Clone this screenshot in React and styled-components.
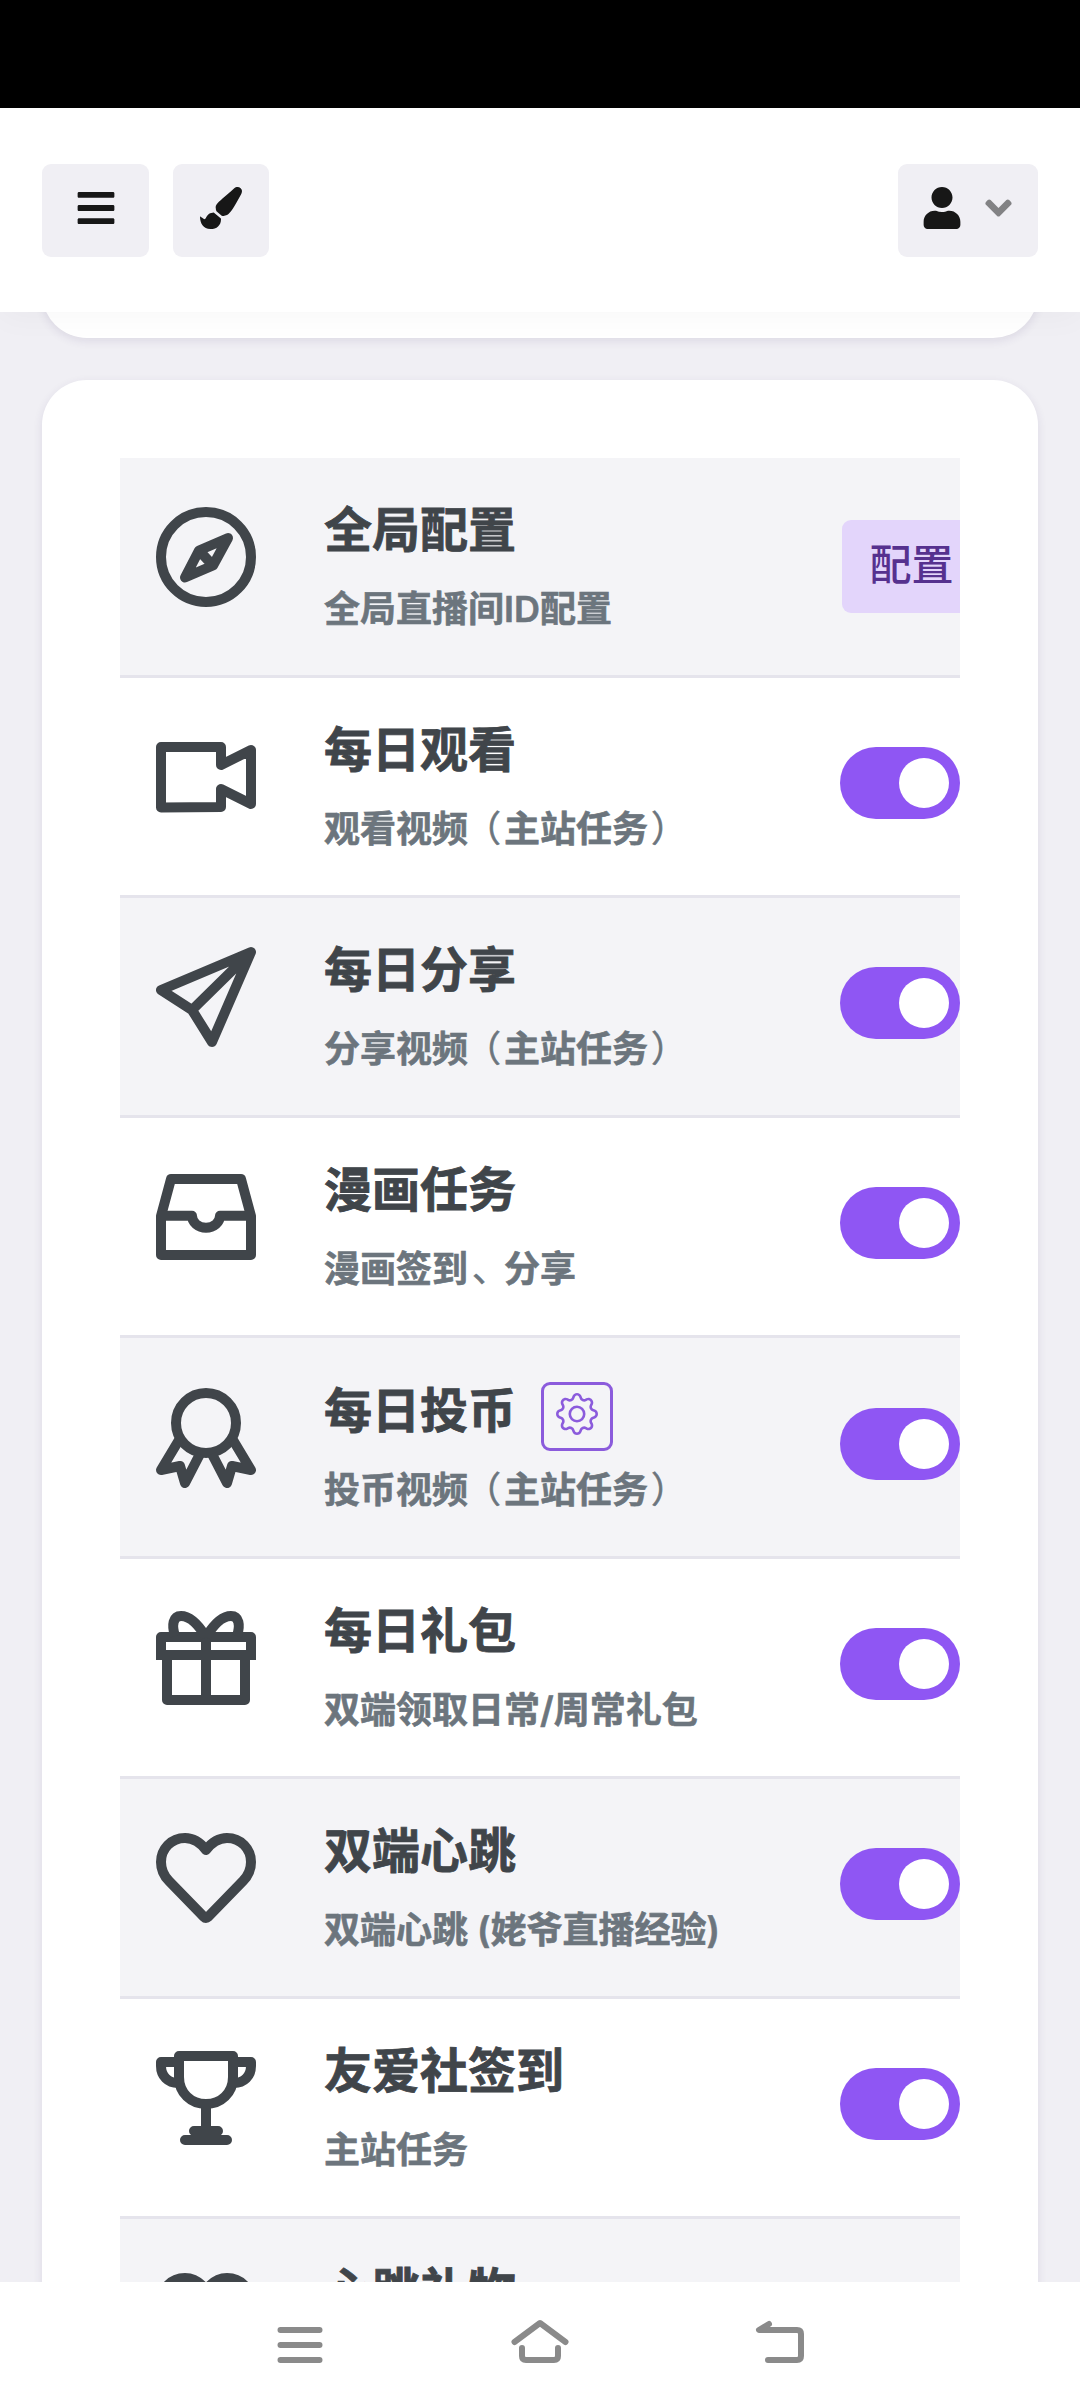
import { useState } from "react";
import styled, { createGlobalStyle } from "styled-components";
import { FaBars, FaPaintBrush, FaUser, FaAngleDown } from "react-icons/fa";
import { BsGear } from "react-icons/bs";


const GlobalStyle = createGlobalStyle`
    * {
        box-sizing: border-box;
    }
    body {
        margin: 0;
        background: #f0eff4;
        font-family: Inter, "Noto Sans CJK SC", sans-serif;
    }
    button {
        font-family: inherit;
        border: 0;
        padding: 0;
        cursor: pointer;
    }
`

const Screen = styled.div`
    display: flex;
    flex-direction: column;
    width: 1080px;
    height: 2408px;
    overflow: hidden;
`

const StatusBar = styled.div`
    flex: none;
    height: 108px;
    background: #000000;
`

const Header = styled.header`
    position: relative;
    z-index: 1;
    flex: none;
    display: flex;
    align-items: flex-start;
    gap: 24px;
    height: 204px;
    padding: 56px 42px 0;
    background: #ffffff;
    box-shadow: 0 6px 30px rgba(0, 0, 0, 0.03);
`

const HeaderBt = styled.button`
    display: flex;
    justify-content: center;
    gap: 22px;
    width: ${(props) => props.$width}px;
    height: 93px;
    padding-top: 23px;
    border-radius: 9px;
    background: #f0eff4;
    color: #171717;
    font-size: 42px;
    &:last-child{
        margin-left: auto;
        padding-right: 3px;
    }
`

const Arrow = styled(FaAngleDown)`
    width: 27px;
    opacity: 0.5;
`

const Content = styled.main`
    flex: 1;
    min-height: 0;
    overflow: hidden;
    padding: 0 42px;
    background: #f0eff4;
`

const Card = styled.section`
    border-radius: 45px;
    background: #ffffff;
    box-shadow: 0 3px 10px rgba(60, 50, 110, 0.11);
`

const PrevCard = styled(Card)`
    height: 126px;
    margin-top: -100px;
    margin-bottom: 42px;
`

const TaskCard = styled(Card)`
    padding: 78px 78px 100px;
`

const TaskTable = styled.ul`
    list-style: none;
    margin: 0;
    padding: 0;
    overflow: hidden;
`

const Row = styled.li`
    display: grid;
    grid-template-columns: 204px 516px 120px;
    height: ${(props) => (props.$tall ? 221 : 220)}px;
    padding-top: ${(props) => (props.$tall ? 1 : 0)}px;
    border-bottom: 3px solid #e5e4ec;
    &:nth-child(odd){
        background: #f4f4f7;
    }
`

const IconSvg = styled.svg`
    width: 100px;
    height: 100px;
    margin: 49px 0 0 36px;
    overflow: visible;
    fill: none;
    stroke: #40454a;
    stroke-width: 10;
    stroke-linejoin: round;
`

const TextBox = styled.div`
    padding-top: 41px;
    white-space: nowrap;
`

const TitleLine = styled.div`
    display: flex;
    gap: 25px;
    height: 60px;
`

const Title = styled.h3`
    margin: 0;
    font-size: 48px;
    line-height: 62px;
    font-weight: 700;
    color: #40454a;
    -webkit-text-stroke: 0.8px #40454a;
`

const GearBt = styled.button`
    display: flex;
    justify-content: center;
    width: 72px;
    height: 69px;
    margin-top: 2px;
    padding-top: 8px;
    border: 3px solid #8b5bdc;
    border-radius: 9px;
    background: transparent;
    color: #8b5bdc;
    font-size: 42px;
`

const Desc = styled.p`
    margin: 23px 0 0;
    font-size: 36px;
    line-height: 54px;
    font-weight: 600;
    color: #6c757d;
    -webkit-text-stroke: 0.6px #6c757d;
`

const Mark = styled.span`
    margin: 0 ${(props) => -props.$shift}px 0 ${(props) => props.$shift}px;
    font-weight: 400;
`

const ConfigBt = styled.button`
    width: 142px;
    height: 93px;
    margin: 62px 0 0 2px;
    border-radius: 9px;
    background: #e3d5fb;
    color: #56318f;
    font-size: 42px;
    font-weight: 500;
    line-height: 90px;
    padding-right: 3px;
    padding-bottom: 3px;
`

const Toggle = styled.button`
    display: flex;
    align-items: center;
    justify-content: ${(props) => (props.$on ? "flex-end" : "flex-start")};
    width: 120px;
    height: 72px;
    margin-top: 69px;
    padding: 0 11px;
    border-radius: 36px;
    background: ${(props) => (props.$on ? "#8f56f3" : "#d5d4dd")};
`

const Thumb = styled.span`
    width: 50px;
    height: 50px;
    border-radius: 50%;
    background: #ffffff;
`

const NavBar = styled.nav`
    flex: none;
    display: flex;
    justify-content: center;
    height: 126px;
    padding-top: 35px;
    background: #ffffff;
`

const NavItem = styled.a`
    display: flex;
    justify-content: center;
    width: 240px;
`

const NavSvg = styled.svg`
    width: 60px;
    height: 50px;
    fill: none;
    stroke: #8a8a8a;
    stroke-width: 6;
    stroke-linecap: round;
    stroke-linejoin: round;
`

const ICONS = {
    compass: (
        <>
            <circle cx="50" cy="50" r="45" />
            <path d="M72 31 43 43.500 29 70.500 57 58.500Z M43 43.500 57 58.500" />
        </>
    ),
    video: <path d="M5 20H65V38L95 23V77L65 62V80L5 80.500Z" />,
    send: <path d="M95 5 5 43 36 63 56 95Z M36 63 95 5" />,
    inbox: (
        <>
            <path d="M5 49 15 12H85L95 49V88H5Z" />
            <path d="M5 48.700H36A14 12 0 0 0 64 48.700H95" />
        </>
    ),
    award: (
        <>
            <circle cx="50" cy="35" r="30" />
            <path d="M23 52 5 82 24 78 29 95 44 66" />
            <path d="M77 52 95 82 76 78 71 95 56 66" />
        </>
    ),
    gift: (
        <>
            <path strokeLinejoin="miter" d="M5 47H95" />
            <path d="M5 52V29H95V52" />
            <path d="M11 50V92H89V50M50 29V92" />
            <path d="M50 29C42 16 33 8 25 8 17 8 15.500 17 19 28M50 29C58 16 67 8 75 8 83 8 84.500 17 81 28" />
        </>
    ),
    heart: (
        <path d="M50 22C44 14 38 10 29 10 15 10 5 21 5 34 5 41 8 48 13 53L48 89Q50 91 52 89L87 53C92 48 95 41 95 34 95 21 85 10 71 10 62 10 56 14 50 22Z" />
    ),
    trophy: (
        <>
            <path d="M23 8H77V29C77 45 65 56 50 56S23 45 23 29Z" />
            <path d="M23 14H5V18C5 28 12 35 22 35M77 14H95V18C95 28 88 35 78 35M50 56V83" />
            <path strokeLinecap="round" d="M38 83H62M29 92H71" />
        </>
    ),
};

const TASKS = [
    { id: "config", icon: "compass", title: "全局配置", desc: "全局直播间ID配置", config: true },
    { id: "watch", icon: "video", title: "每日观看", desc: "观看视频（主站任务）" },
    { id: "share", icon: "send", title: "每日分享", desc: "分享视频（主站任务）" },
    { id: "manga", icon: "inbox", title: "漫画任务", desc: "漫画签到、分享" },
    { id: "coin", icon: "award", title: "每日投币", desc: "投币视频（主站任务）", gear: true },
    { id: "bag", icon: "gift", title: "每日礼包", desc: "双端领取日常/周常礼包" },
    { id: "heart", icon: "heart", title: "双端心跳", desc: "双端心跳 (姥爷直播经验)" },
    { id: "club", icon: "trophy", title: "友爱社签到", desc: "主站任务" },
    { id: "gift", icon: "heart", title: "心跳礼物", desc: "主站任务" },
];

// full-width punctuation stays in the regular weight and sits nearer the middle of its cell
const MARKS = { "（": -3, "）": 3, "、": 4 };

function DescText({ text }) {
    return (
        <Desc>
            {text.split(/([（）、])/).map((part, index) => {
                return part in MARKS ? <Mark $shift={MARKS[part]} key={index}>{part}</Mark> : part
            })}
        </Desc>
    );
}

function TaskRow({ task }) {
    const [on, setOn] = useState(true);

    return (
        <Row $tall={task.gear}>
            <IconSvg viewBox="0 0 100 100">{ICONS[task.icon]}</IconSvg>
            <TextBox>
                <TitleLine>
                    <Title>{task.title}</Title>
                    {task.gear && <GearBt><BsGear /></GearBt>}
                </TitleLine>
                <DescText text={task.desc} />
            </TextBox>
            {task.config
                ? <ConfigBt>配置</ConfigBt>
                : <Toggle $on={on} onClick={() => setOn(c => !c)}><Thumb /></Toggle>}
        </Row>
    );
}

export default function App() {
    return (
        <Screen>
            <GlobalStyle />
            <StatusBar />
            <Header>
                <HeaderBt $width={107}><FaBars /></HeaderBt>
                <HeaderBt $width={96}><FaPaintBrush /></HeaderBt>
                <HeaderBt $width={140}><FaUser /><Arrow /></HeaderBt>
            </Header>

            <Content>
                <PrevCard />
                <TaskCard>
                    <TaskTable>
                        {TASKS.map((one) => <TaskRow task={one} key={one.id} />)}
                    </TaskTable>
                </TaskCard>
            </Content>

            <NavBar>
                <NavItem>
                    <NavSvg viewBox="0 0 60 50"><path d="M10.500 13H49.500M10.500 28H49.500M10.500 43H49.500" /></NavSvg>
                </NavItem>
                <NavItem>
                    <NavSvg viewBox="0 0 60 50">
                        <path d="M4.500 25 30 6 55.500 25" />
                        <path d="M12 31V39Q12 43 16 43H44Q48 43 48 39V31" />
                    </NavSvg>
                </NavItem>
                <NavItem>
                    <NavSvg viewBox="0 0 60 50"><path d="M19 7 9 13H47Q51 13 51 17V39Q51 43 47 43H18" /></NavSvg>
                </NavItem>
            </NavBar>
        </Screen>
    );
}
